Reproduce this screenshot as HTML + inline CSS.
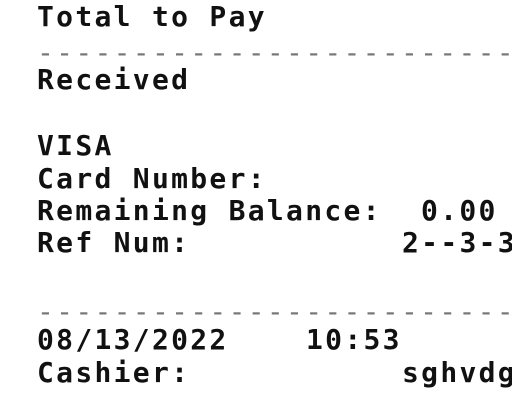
<!DOCTYPE html>
<html><head><style>
html,body{margin:0;padding:0;background:#fff;width:512px;height:400px;overflow:hidden}
div{position:absolute;font-family:"DejaVu Sans Mono",monospace;font-weight:bold;font-size:28px;letter-spacing:2.3px;line-height:32px;white-space:pre;color:#111;left:37px}
span{position:absolute;top:0}
.d{font-weight:normal;color:#777}
</style></head><body>
<div style="top:1px">Total to Pay</div>
<div class="d" style="top:37px">--------------------------</div>
<div style="top:64px">Received</div>
<div style="top:130px">VISA</div>
<div style="top:163px">Card Number:</div>
<div style="top:195px">Remaining Balance:<span style="left:384px">0.00</span></div>
<div style="top:227px">Ref Num:<span style="left:365px">2--3-3</span></div>
<div class="d" style="top:296px">--------------------------</div>
<div style="top:324px">08/13/2022<span style="left:269px">10:53</span></div>
<div style="top:357px">Cashier:<span style="left:365px">sghvdg</span></div>
</body></html>
